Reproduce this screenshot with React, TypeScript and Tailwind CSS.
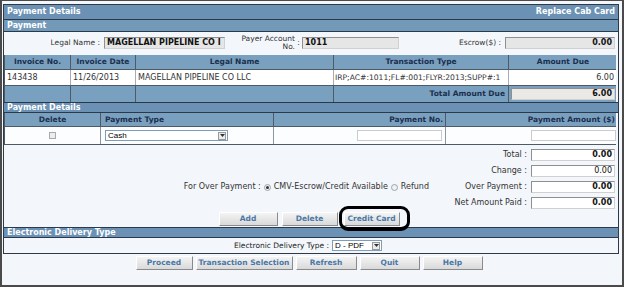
import React from "react";

const BAR = "bg-[#6b92b4] text-white font-bold text-[8px] leading-none flex items-center px-[3px]";
const HEAD = "bg-[#7aa0c0] text-[#1b2f4d] font-bold text-[7.5px]";

function Btn({ label, w, children }: { label: string; w: string; children?: React.ReactNode }) {
  return (
    <div
      className={`relative h-[14px] ${w} flex items-center justify-center bg-gradient-to-b from-[#f4f4f4] to-[#d9d9d9] border border-t-[#ffffff] border-l-[#ffffff] border-b-[#8a8a8a] border-r-[#8a8a8a] text-[#4a78a6] font-bold text-[7.5px]`}
    >
      {label}
      {children}
    </div>
  );
}

function RoInput({ text, w, bold = true, align = "right", bg = "bg-[#e6e6e6]", size = "text-[7.5px]" }: { text: string; w: string; bold?: boolean; align?: string; bg?: string; size?: string }) {
  return (
    <div
      className={`h-[12px] ${w} ${bg} border border-[#8f8f8f] border-r-[#d0d0d0] border-b-[#d0d0d0] flex items-center px-[2px] ${size} text-[#111] ${bold ? "font-bold" : ""} ${align === "right" ? "justify-end" : "justify-start"} overflow-hidden whitespace-nowrap`}
    >
      {text}
    </div>
  );
}

function Select({ text, w }: { text: string; w: string }) {
  return (
    <div className={`h-[11px] ${w} bg-white border border-[#7f9db9] flex items-center justify-between pl-[2px] pr-[1px] text-[8px] text-[#000] font-['Liberation_Sans',sans-serif]`}>
      <span>{text}</span>
      <span className="w-[8px] h-[8px] border border-[#9a9a9a] bg-[#ececec] flex items-center justify-center">
        <svg width="5" height="3" viewBox="0 0 5 3">
          <path d="M0 0 L5 0 L2.5 3 Z" fill="#333" />
        </svg>
      </span>
    </div>
  );
}

function Radio({ on }: { on: boolean }) {
  return (
    <span className="w-[7px] h-[7px] rounded-full border border-[#9aa5b0] bg-[#f0f0f0] flex items-center justify-center">
      {on && <span className="w-[3px] h-[3px] rounded-full bg-[#334]" />}
    </span>
  );
}

export default function App() {
  return (
    <div className="w-[624px] h-[287px] bg-[#f3f7fb] border-[2px] border-t-[1px] border-[#4a4a4a] font-['DejaVu_Sans',sans-serif] text-[7px] text-[#222] overflow-hidden">
      <div className="ml-[1px] mt-[3px] w-[616px] border border-[#2f3a44] bg-[#f3f7fb]">
        <div className={`${BAR} h-[15px] justify-between border-b border-[#2a3a4a]`}>
          <span>Payment Details</span>
          <span>Replace Cab Card</span>
        </div>
        <div className={`${BAR} h-[12px] bg-[#7399b9] border-b border-[#2a3a4a]`}>Payment</div>

        <div className="h-[21px] flex items-center text-[7.5px] text-[#333]">
          <div className="w-[96px] text-right">Legal Name :</div>
          <div className="ml-[4px]">
            <RoInput text="MAGELLAN PIPELINE CO I" w="w-[121px]" align="left" size="text-[8px]" />
          </div>
          <div className="w-[70px] text-right leading-[8px]">
            Payer Account
            <br />
            No.
          </div>
          <div className="w-[7px] text-center">:</div>
          <RoInput text="1011" w="w-[97px]" align="left" size="text-[8px]" />
          <div className="flex-1 text-right pr-[4px]">Escrow($) :</div>
          <div className="mr-[3px]">
            <RoInput text="0.00" w="w-[110px]" size="text-[8px]" />
          </div>
        </div>

        <div className="mt-[2px] w-[612px] border-l border-[#4d5b69]">
          <div className={`grid grid-cols-[66px_65px_198px_175px_108px] h-[14px] ${HEAD}`}>
            <div className="flex items-center justify-center border-r border-[#4d5b69]">Invoice No.</div>
            <div className="flex items-center justify-center border-r border-[#4d5b69]">Invoice Date</div>
            <div className="flex items-center justify-center border-r border-[#4d5b69]">Legal Name</div>
            <div className="flex items-center justify-center border-r border-[#4d5b69]">Transaction Type</div>
            <div className="flex items-center justify-center">Amount Due</div>
          </div>
          <div className="grid grid-cols-[66px_65px_198px_175px_108px] h-[17px] bg-white border-t border-b border-[#4d5b69] text-[8px] text-[#333]">
            <div className="flex items-center pl-[2px] border-r border-[#aab]">143438</div>
            <div className="flex items-center pl-[2px] border-r border-[#aab]">11/26/2013</div>
            <div className="flex items-center pl-[2px] border-r border-[#aab]">MAGELLAN PIPELINE CO LLC</div>
            <div className="flex items-center pl-[1px] border-r border-[#aab] whitespace-nowrap text-[7.6px]">IRP;AC#:1011;FL#:001;FLYR:2013;SUPP#:1</div>
            <div className="flex items-center justify-end pr-[3px]">6.00</div>
          </div>
          <div className={`grid grid-cols-[66px_65px_198px_175px_108px] h-[16px] ${HEAD}`}>
            <div className="border-r border-[#4d5b69]" />
            <div className="border-r border-[#4d5b69]" />
            <div className="border-r border-[#4d5b69]" />
            <div className="flex items-center justify-end pr-[3px] border-r border-[#4d5b69]">Total Amount Due</div>
            <div className="flex items-center pl-[2px]">
              <RoInput text="6.00" w="w-[104px]" bg="bg-[#ebe9e6]" size="text-[8px]" />
            </div>
          </div>
        </div>

        <div className={`${BAR} h-[11px] border-t border-b border-[#2a3a4a]`}>Payment Details</div>

        <div className="w-[612px] border-l border-[#4d5b69]">
          <div className={`grid grid-cols-[96px_173px_172px_171px] h-[13px] ${HEAD}`}>
            <div className="flex items-center justify-center border-r border-[#4d5b69]">Delete</div>
            <div className="flex items-center pl-[4px] border-r border-[#4d5b69]">Payment Type</div>
            <div className="flex items-center justify-end pr-[2px] border-r border-[#4d5b69]">Payment No.</div>
            <div className="flex items-center justify-end pr-[2px]">Payment Amount ($)</div>
          </div>
          <div className="grid grid-cols-[96px_173px_172px_171px] h-[19px] bg-[#fbfdff] border-t border-b border-[#4d5b69]">
            <div className="flex items-center justify-center border-r border-[#8a96a2]">
              <span className="w-[7px] h-[7px] border border-[#a9a9a9] bg-[#ededed]" />
            </div>
            <div className="flex items-center pl-[4px] border-r border-[#8a96a2]">
              <Select text="Cash" w="w-[123px]" />
            </div>
            <div className="flex items-center justify-end pr-[3px] border-r border-[#8a96a2]">
              <div className="w-[85px] h-[11px] bg-white border border-[#c8ccd0]" />
            </div>
            <div className="flex items-center justify-end pr-[1px]">
              <div className="w-[85px] h-[11px] bg-white border border-[#c8ccd0]" />
            </div>
          </div>
        </div>

        <div className="pt-[2px] text-[8px] text-[#333]">
          {[
            { l: "Total :", v: "0.00", b: true },
            { l: "Change :", v: "0.00", b: false },
            { l: "Over Payment :", v: "0.00", b: true, radio: true },
            { l: "Net Amount Paid :", v: "0.00", b: true },
          ].map((r) => (
            <div key={r.l} className="h-[16px] flex items-center">
              <div className="w-[437px] flex items-center justify-end pr-[12px] gap-[3px]">
                {r.radio && (
                  <>
                    <span>For Over Payment :</span>
                    <Radio on={true} />
                    <span>CMV-Escrow/Credit Available</span>
                    <Radio on={false} />
                    <span>Refund</span>
                  </>
                )}
              </div>
              <div className="w-[86px] text-right">{r.l}</div>
              <div className="ml-[4px]">
                <RoInput text={r.v} w="w-[84px]" bold={r.b} bg="bg-white" size="text-[8px]" />
              </div>
            </div>
          ))}
        </div>

        <div className="h-[16px] flex items-center justify-center gap-[4px] pr-[4px]">
          <Btn label="Add" w="w-[59px]" />
          <Btn label="Delete" w="w-[56px]" />
          <div className="ml-[2px]">
            <Btn label="Credit Card" w="w-[56px]">
              <span className="absolute -left-[6px] -top-[7px] w-[71px] h-[25px] border-[3px] border-black rounded-[9px] border-b-[4px]" />
            </Btn>
          </div>
        </div>

        <div className={`${BAR} h-[11px] border-t border-b border-[#2a3a4a]`}>Electronic Delivery Type</div>
        <div className="h-[15px] flex items-center justify-center gap-[3px] text-[7.5px] text-[#222] pr-[6px]">
          <span>Electronic Delivery Type :</span>
          <Select text="D - PDF" w="w-[50px]" />
        </div>
      </div>

      <div className="mt-[2px] flex justify-center gap-[3px] pr-[6px]">
        <Btn label="Proceed" w="w-[57px]" />
        <Btn label="Transaction Selection" w="w-[97px]" />
        <Btn label="Refresh" w="w-[61px]" />
        <Btn label="Quit" w="w-[60px]" />
        <Btn label="Help" w="w-[60px]" />
      </div>
    </div>
  );
}
